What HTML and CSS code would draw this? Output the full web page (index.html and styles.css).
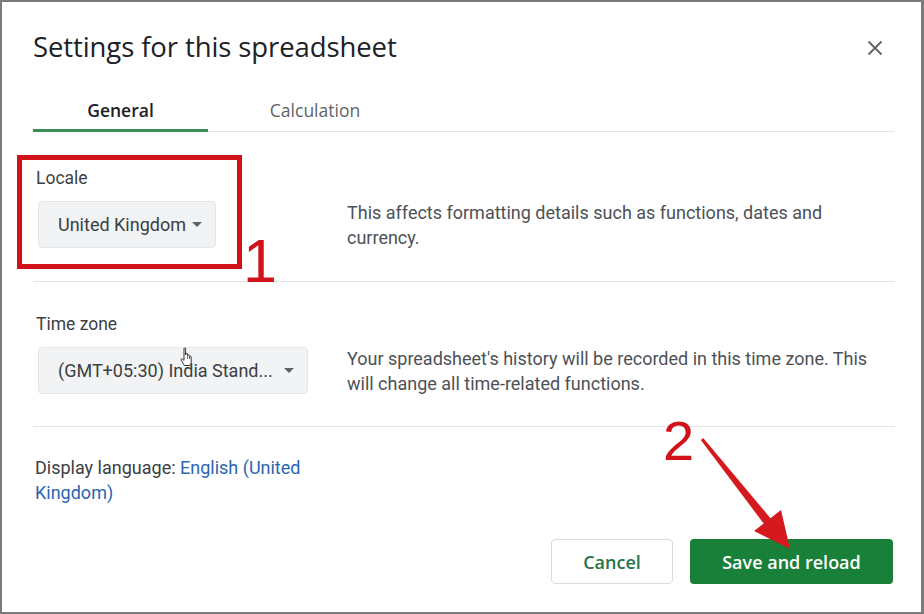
FILE: index.html
```html
<!DOCTYPE html>
<html lang="en">
<head>
  <meta charset="UTF-8" />
  <meta name="viewport" content="width=device-width, initial-scale=1.0"/>
  <title>Settings for this spreadsheet</title>
  <link rel="stylesheet" href="styles.css">
</head>
<body>
  <div class="frame">
    <div class="dialog-head">
      <h1>Settings for this spreadsheet</h1>
      <button class="close" aria-label="Close">
        <svg width="16" height="16" viewBox="0 0 16 16"><path d="M1.5 1.5 L14.5 14.5 M14.5 1.5 L1.5 14.5" stroke="#5f6368" stroke-width="1.8" fill="none"/></svg>
      </button>
    </div>

    <div class="tabs">
      <div class="tab active">General</div>
      <div class="tab">Calculation</div>
    </div>

    <div class="row">
      <div class="field">
        <div class="label">Locale</div>
        <div class="select locale">United Kingdom <span class="caret"></span></div>
      </div>
      <p class="desc">This affects formatting details such as functions, dates and currency.</p>
    </div>

    <div class="row">
      <div class="field">
        <div class="label">Time zone</div>
        <div class="select tz">(GMT+05:30) India Stand... <span class="caret"></span></div>
      </div>
      <p class="desc">Your spreadsheet's history will be recorded in this time zone. This will change all time-related functions.</p>
    </div>

    <p class="lang">Display language: <a href="#">English (United Kingdom)</a></p>

    <div class="actions">
      <button class="btn cancel">Cancel</button>
      <button class="btn save">Save and reload</button>
    </div>
  </div>

  <!-- annotations -->
  <div class="mark-box"></div>
  <div class="num one">1</div>
  <div class="num two">2</div>
  <svg class="arrow" width="110" height="130" viewBox="0 0 110 130">
    <polygon points="13.2,8.1 10.8,9.9 74.5,94.6 81.5,89.4" fill="#d41a1f"/>
    <polygon points="100,119 64,101 91,80" fill="#d41a1f"/>
  </svg>
  <svg class="cursor" width="14" height="21" viewBox="0 0 14 21">
    <path d="M4 1.5 C4 0.7 5.6 0.7 5.6 1.5 L5.6 8 L6 6.8 C6.3 6 7.6 6.2 7.6 7 L7.8 8.4 C8.1 7.6 9.4 7.8 9.4 8.6 L9.6 9.6 C9.9 8.9 11.2 9.1 11.2 9.9 L11.2 14 C11.2 16 10.4 17.5 9.8 18.5 L4.4 18.5 L1.2 13.2 C0.7 12.3 1.8 11.3 2.6 12 L4 13.4 Z" fill="#fff" stroke="#222" stroke-width="0.9"/>
    <path d="M7.6 8.5 V12 M9.4 9.5 V12" stroke="#222" stroke-width="0.7"/>
  </svg>
</body>
</html>
```

FILE: styles.css
```css
html, body {
  margin: 0;
  padding: 0;
}
body {
  font-family: Roboto, "Liberation Sans", sans-serif;
  background: #fff;
  color: #3c4043;
}
.frame {
  box-sizing: border-box;
  height: 614px;
  width: 924px;
  border: 2px solid #7b7b7b;
  border-right-width: 3px;
  background: #fff;
  padding: 0 26px 28px 31px;
  display: flex;
  flex-direction: column;
}
.dialog-head {
  display: flex;
  align-items: center;
  justify-content: space-between;
  padding-top: 26px;
  height: 36px;
}
h1 {
  margin: 0;
  font-family: "Open Sans", sans-serif;
  font-weight: 400;
  font-size: 27.5px;
  color: #202124;
  letter-spacing: -0.1px;
}
.close {
  border: none;
  background: none;
  padding: 0;
  margin-right: 12px;
  margin-top: 4px;
  width: 16px;
  height: 16px;
  display: flex;
  cursor: pointer;
}
.tabs {
  display: flex;
  margin-top: 22px;
  border-bottom: 1px solid #e3e3e3;
}
.tab {
  width: 175px;
  height: 46px;
  box-sizing: border-box;
  display: flex;
  align-items: center;
  justify-content: center;
  font-family: "Open Sans", sans-serif;
  font-size: 17.5px;
  color: #5f6368;
  padding-top: 5px;
  border-bottom: 3px solid transparent;
  margin-bottom: -1px;
}
.tab.active {
  color: #202124;
  font-weight: 600;
  border-bottom-color: #3c8c57;
}
.tab + .tab {
  width: 214px;
}
.row {
  display: flex;
  align-items: flex-end;
  padding: 34px 0 33px 3px;
  border-bottom: 1px solid #e3e3e3;
}
.row + .row {
  padding-top: 30px;
  padding-bottom: 32px;
}
.field {
  width: 311px;
  flex: none;
}
.label {
  font-size: 17.5px;
  line-height: 24px;
  color: #3c4043;
  margin-bottom: 11px;
}
.select {
  box-sizing: border-box;
  height: 47px;
  margin-left: 2px;
  display: flex;
  align-items: center;
  justify-content: space-between;
  padding: 0 13px 0 19px;
  background: #f1f3f4;
  border: 1px solid #e4e6e8;
  border-radius: 4px;
  font-size: 18px;
  color: #3c4043;
}
.select.locale {
  width: 178px;
}
.select.tz {
  width: 270px;
}
.caret {
  width: 0;
  height: 0;
  border-left: 5px solid transparent;
  border-right: 5px solid transparent;
  border-top: 5px solid #5f6368;
}
.desc {
  margin: 0 0 -2px;
  font-size: 18px;
  line-height: 25px;
  color: #4d5156;
  max-width: 530px;
}
.lang {
  margin: 28px 0 0 2px;
  width: 290px;
  font-size: 18px;
  line-height: 25px;
  color: #3c4043;
}
.lang a {
  color: #2a66b0;
  text-decoration: none;
}
.actions {
  margin-top: auto;
  display: flex;
  justify-content: flex-end;
  gap: 17px;
  padding-right: 2px;
}
.btn {
  height: 45px;
  border-radius: 4px;
  font-family: "Open Sans", sans-serif;
  font-size: 18px;
  font-weight: 600;
  cursor: pointer;
}
.cancel {
  width: 122px;
  background: #fff;
  color: #26734a;
  border: 1px solid #dadce0;
}
.save {
  width: 203px;
  background: #188038;
  color: #fff;
  border: none;
}
.mark-box {
  position: absolute;
  left: 17px;
  top: 155px;
  width: 225px;
  height: 114px;
  box-sizing: border-box;
  border: 5px solid #d0121b;
}
.num {
  position: absolute;
  font-family: "Liberation Sans", sans-serif;
  line-height: 1;
  color: #d0121b;
}
.num.one {
  left: 243px;
  top: 231px;
  font-size: 61px;
}
.num.two {
  left: 663px;
  top: 413px;
  font-size: 56px;
}
.arrow {
  position: absolute;
  left: 690px;
  top: 430px;
}
.cursor {
  position: absolute;
  left: 180px;
  top: 347px;
}
```
